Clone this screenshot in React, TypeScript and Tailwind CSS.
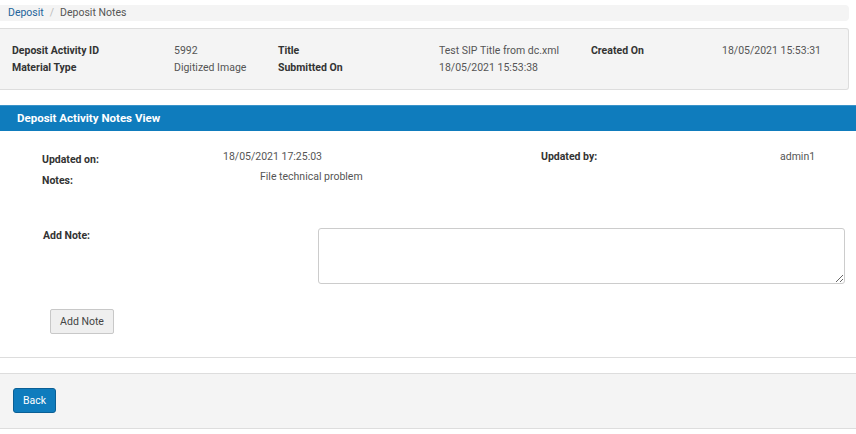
import React from 'react';

const infoRows = [
    ['Deposit Activity ID', '5992', 'Title', 'Test SIP Title from dc.xml', 'Created On', '18/05/2021 15:53:31'],
    ['Material Type', 'Digitized Image', 'Submitted On', '18/05/2021 15:53:38', '', ''],
];

const App: React.FC = () => {
    return (
        <div className="w-[856px] h-[434px] bg-white text-[10.5px] text-[#555] overflow-hidden" style={{ fontFamily: 'Roboto, "Liberation Sans", sans-serif' }}>
            {/* breadcrumb */}
            <div className="mt-[5px] mr-[7px] h-[16px] bg-[#f4f4f4] rounded-r-[4px] pl-[8px] flex items-center leading-[16px]">
                <span className="text-[#23649b]">Deposit</span>
                <span className="text-[#bbb] px-[6px]">/</span>
                <span className="text-[#555]">Deposit Notes</span>
            </div>

            {/* activity info */}
            <div className="mt-[7px] mr-[7px] h-[62px] bg-[#f4f4f4] border border-l-0 border-[#ddd] rounded-r-[3px] pl-[12px] pt-[13px]">
                <div className="grid grid-cols-[162px_104px_161px_152px_131px_1fr] leading-[17px]">
                    {infoRows.map((row, i) => (
                        <React.Fragment key={i}>
                            {row.map((cell, j) => (
                                <span key={j} className={j % 2 === 0 ? 'font-bold text-[#333]' : 'text-[#555]'}>
                                    {cell}
                                </span>
                            ))}
                        </React.Fragment>
                    ))}
                </div>
            </div>

            {/* notes view */}
            <div className="mt-[15px] h-[26px] bg-[#0f7cbd] border-t border-[#3a93c9] pl-[17px] flex items-center text-[11.5px] font-bold text-white">
                Deposit Activity Notes View
            </div>

            <div className="pl-[42px] pt-[19px] h-[227px] border-b border-[#ddd]">
                <div className="flex leading-[14px]">
                    <span className="w-[181px] font-bold text-[#333] mt-[3px]">Updated on:</span>
                    <span className="w-[318px]">18/05/2021 17:25:03</span>
                    <span className="w-[239px] font-bold text-[#333]">Updated by:</span>
                    <span>admin1</span>
                </div>
                <div className="flex leading-[14px] mt-[3px]">
                    <span className="w-[218px] font-bold text-[#333] mt-[4px]">Notes:</span>
                    <span>File technical problem</span>
                </div>

                <div className="flex mt-[40px]">
                    <span className="w-[276px] pl-[1px] font-bold text-[#333]">Add Note:</span>
                    <textarea className="w-[527px] h-[56px] border border-[#ccc] rounded-[3px] bg-white outline-none" />
                </div>

                <button className="ml-[8px] mt-[25px] w-[64px] h-[25px] bg-[#efefef] border border-[#c8c8c8] rounded-[2px] text-[10.5px] text-[#444]" style={{ fontFamily: 'Roboto, "Liberation Sans", sans-serif' }}>
                    Add Note
                </button>
            </div>

            {/* footer */}
            <div className="mt-[15px] h-[56px] bg-[#f4f4f4] border-y border-[#ddd] pl-[13px] pt-[14px]">
                <button className="w-[43px] h-[25px] bg-[#0f7cbd] border border-[#0a5f95] rounded-[3px] text-[10.5px] text-white" style={{ fontFamily: 'Roboto, "Liberation Sans", sans-serif' }}>
                    Back
                </button>
            </div>
        </div>
    );
};

export default App;
